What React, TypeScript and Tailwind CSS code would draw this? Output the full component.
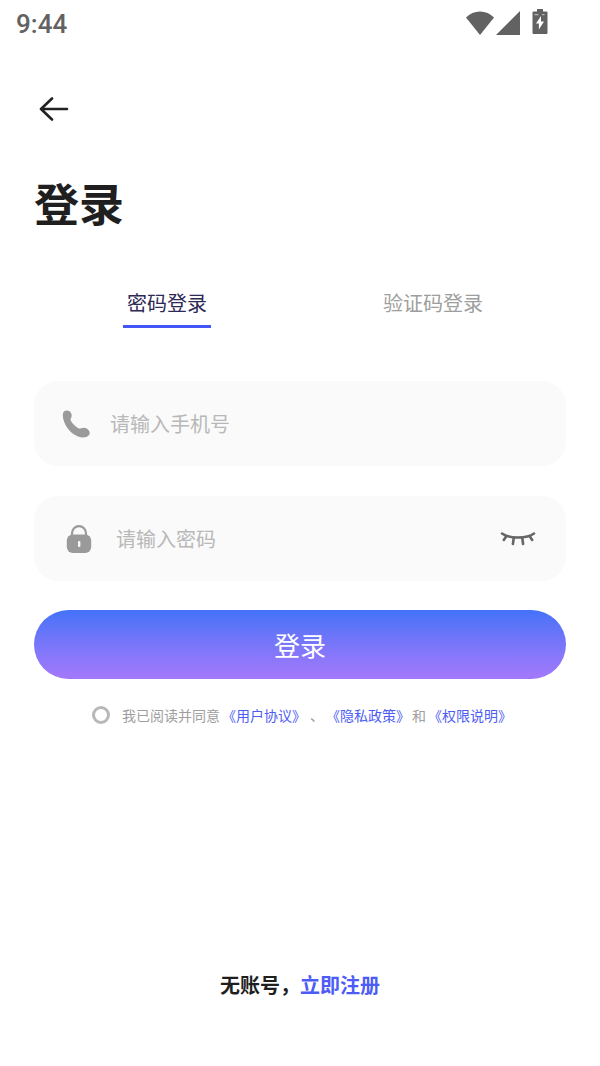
import { useState } from "react";

type LoginMode = "password" | "code";

interface TabProps {
  label: string;
  active: boolean;
  onClick: () => void;
}

const StatusBar = () => {
  return (
    <div className="flex h-11 items-center justify-between pt-1 pr-[52px] pl-4 text-[#626262]">
      <span className="font-[Roboto,sans-serif] text-[26px] leading-8 font-medium">
        9:44
      </span>
      <div className="flex items-center pb-0.5">
        <svg width="28" height="24" viewBox="0 0 28 24" fill="currentColor">
          <path d="M0 6.4C3.8 2.6 8.600.4 14 .4s10.200 2.200 14 6L14 24Z" />
        </svg>
        <svg
          width="24"
          height="24"
          viewBox="0 0 24 24"
          fill="currentColor"
          className="ml-0.5"
        >
          <path d="M24 0v24H0Z" />
        </svg>
        <svg width="16" height="26" viewBox="0 0 16 26" className="mb-0.5 ml-3">
          <path
            fill="currentColor"
            d="M5 0h6v2.500h3.500q1 0 1 1V24q0 1-1 1h-13q-1 0-1-1V3.500q0-1 1-1H5Z"
          />
          <path fill="#fff" d="M9 7 4 14.500h2.900v6L12 12.500H9Z" />
          <path fill="#b5b5b5" d="M2.500 5h4v1.200h-4ZM10 5h2.500v1.200H10Z" />
        </svg>
      </div>
    </div>
  );
};

const Tab = ({ label, active, onClick }: TabProps) => {
  return (
    <button
      type="button"
      role="tab"
      aria-selected={active}
      onClick={onClick}
      className={
        active
          ? "cursor-pointer justify-self-center border-b-3 border-[#4356f5] px-1 pb-2 text-[#2e2a55]"
          : "cursor-pointer justify-self-center border-b-3 border-transparent px-1 pb-2 text-[#9e9e9e]"
      }
    >
      {label}
    </button>
  );
};

const PhoneIcon = () => {
  return (
    <svg width="28" height="28" viewBox="0 0 28 28" fill="#9a9a9a">
      <path d="M2 1.500C4-.2 7.300.3 8.700 2.400c1.300 1.900 1.300 4 .2 5.800-.6 1.100-.5 1.800.1 2.900 1.800 3 4.400 5.600 7.300 7.100 1.100.6 1.800.5 2.800 0 1.800-.9 4.300-.6 6 .5 2.300 1.500 3.400 4.300 2 6.300-2 2.700-7 3.200-11 1.600C9 23.800 3.400 17 1.400 9.500.7 6.800.3 3.300 2 1.500Z" />
    </svg>
  );
};

const LockIcon = () => {
  return (
    <svg width="26" height="28" viewBox="0 0 26 28" fill="none">
      <path
        d="M6 12V8.500a7 7.300 0 0 1 14 0V12"
        stroke="#9a9a9a"
        strokeWidth="2.200"
      />
      <rect x=".8" y="9.500" width="24.400" height="18.500" rx="6" fill="#9a9a9a" />
      <rect x="12" y="16" width="2.400" height="6" rx="1" fill="#fafafa" />
    </svg>
  );
};

const ClosedEyeIcon = () => {
  return (
    <svg
      width="36"
      height="16"
      viewBox="0 0 36 16"
      fill="none"
      stroke="#666"
      strokeWidth="2.600"
      strokeLinecap="round"
    >
      <path d="M2 2.500C6 5.500 11.500 6.500 18 6.500s12-1 16-4M6.300 5.200 3.800 9M13.800 6.500l-.9 6.500M22.200 6.500l.9 6.500M29.700 5.200l2.500 3.800" />
    </svg>
  );
};

const App = () => {
  const [mode, setMode] = useState<LoginMode>("password");
  const [showPassword, setShowPassword] = useState(false);

  return (
    <div className="flex min-h-screen flex-col bg-white font-['Noto_Sans_CJK_SC',sans-serif] text-[#1f1f1f]">
      <StatusBar />

      <main className="flex flex-1 flex-col px-[34px] pb-[67px]">
        <button
          type="button"
          aria-label="返回"
          className="mt-[49px] ml-1 flex h-8 w-8 cursor-pointer items-center justify-center"
        >
          <svg
            width="30"
            height="24"
            viewBox="0 0 30 24"
            fill="none"
            stroke="#222"
            strokeWidth="2.600"
            strokeLinecap="round"
            strokeLinejoin="round"
          >
            <path d="M28 12H2M13 1.500 2 12l11 10.500" />
          </svg>
        </button>

        <h1 className="mt-12 text-[45px] leading-[60px] font-bold">登录</h1>

        <div role="tablist" className="mt-14 grid grid-cols-2 text-xl">
          <Tab
            label="密码登录"
            active={mode === "password"}
            onClick={() => setMode("password")}
          />
          <Tab
            label="验证码登录"
            active={mode === "code"}
            onClick={() => setMode("code")}
          />
        </div>

        <form
          className="mt-[53px] flex flex-col"
          onSubmit={(event) => event.preventDefault()}
        >
          <label className="flex h-[85px] items-center rounded-3xl bg-[#fafafa] px-7">
            <PhoneIcon />
            <input
              type="tel"
              aria-label="手机号"
              placeholder="请输入手机号"
              className="ml-5 min-w-0 flex-1 text-xl outline-none placeholder:text-[#b8b8b8]"
            />
          </label>

          <div className="mt-[30px] flex h-[85px] items-center rounded-3xl bg-[#fafafa] pr-[30px] pl-8">
            <LockIcon />
            <input
              type={showPassword ? "text" : "password"}
              aria-label="密码"
              placeholder="请输入密码"
              className="ml-6 min-w-0 flex-1 text-xl outline-none placeholder:text-[#b8b8b8]"
            />
            <button
              type="button"
              aria-label="显示密码"
              onClick={() => setShowPassword(!showPassword)}
              className="cursor-pointer"
            >
              <ClosedEyeIcon />
            </button>
          </div>

          <button
            type="submit"
            className="mt-[29px] h-[69px] cursor-pointer rounded-full bg-linear-to-b from-[#4272f8] to-[#a478fb] text-[26px] text-white"
          >
            登录
          </button>

          <div className="mt-6 flex items-center justify-center pl-1 text-sm leading-6 text-[#9e9e9e]">
            <input
              id="agree"
              type="checkbox"
              className="mr-3 h-[18px] w-[18px] cursor-pointer appearance-none rounded-full border-3 border-[#b8b8b8] checked:bg-[#4356f5]"
            />
            <label htmlFor="agree">我已阅读并同意</label>
            <a href="#user" className="ml-0.5 text-[#4c5cf5]">
              《用户协议》
            </a>
            <span className="ml-1">、</span>
            <a href="#privacy" className="ml-0.5 text-[#4c5cf5]">
              《隐私政策》
            </a>
            <span className="mx-0.5">和</span>
            <a href="#permission" className="text-[#4c5cf5]">
              《权限说明》
            </a>
          </div>
        </form>

        <p className="mt-auto text-center text-xl font-bold">
          无账号，
          <a href="#register" className="text-[#4c5cf5]">
            立即注册
          </a>
        </p>
      </main>
    </div>
  );
};

export default App;
